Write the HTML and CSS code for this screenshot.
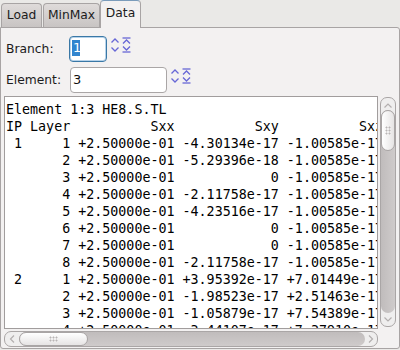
FILE: index.html
```html
<!DOCTYPE html>
<html lang="en">
<head>
    <meta charset="UTF-8">
    <title>Element data</title>
    <link rel="stylesheet" href="styles.css">
</head>
<body>
    <div class="tabs">
        <div class="tab tab-load">Load</div>
        <div class="tab tab-minmax">MinMax</div>
        <div class="tab tab-data active">Data</div>
    </div>

    <div class="panel">
        <div class="form">
            <div class="form-row">
                <label class="label">Branch:</label>
                <div class="spin-input branch-input focused"><span class="selected">1</span></div>
                <svg class="spin-icons" width="22" height="16" viewBox="0 0 22 16">
                    <polyline points="1.5,5.5 5,2 8.5,5.5"/>
                    <polyline points="1.5,10.5 5,14 8.5,10.5"/>
                    <line x1="12.5" y1="1" x2="20.5" y2="1"/>
                    <polyline points="13,6.5 16.5,3 20,6.5"/>
                    <polyline points="13,9.5 16.5,13 20,9.5"/>
                    <line x1="12.5" y1="15" x2="20.5" y2="15"/>
                </svg>
            </div>
            <div class="form-row">
                <label class="label element-label">Element:</label>
                <div class="spin-input element-input">3</div>
                <svg class="spin-icons" width="22" height="16" viewBox="0 0 22 16">
                    <polyline points="1.5,5.5 5,2 8.5,5.5"/>
                    <polyline points="1.5,10.5 5,14 8.5,10.5"/>
                    <line x1="12.5" y1="1" x2="20.5" y2="1"/>
                    <polyline points="13,6.5 16.5,3 20,6.5"/>
                    <polyline points="13,9.5 16.5,13 20,9.5"/>
                    <line x1="12.5" y1="15" x2="20.5" y2="15"/>
                </svg>
            </div>
        </div>

        <div class="output">
            <div class="output-main">
                <div class="textbox">
<pre>Element 1:3 HE8.S.TL
IP Layer          Sxx          Sxy          Sxz
 1     1 +2.50000e-01 -4.30134e-17 -1.00585e-17
       2 +2.50000e-01 -5.29396e-18 -1.00585e-17
       3 +2.50000e-01            0 -1.00585e-17
       4 +2.50000e-01 -2.11758e-17 -1.00585e-17
       5 +2.50000e-01 -4.23516e-17 -1.00585e-17
       6 +2.50000e-01            0 -1.00585e-17
       7 +2.50000e-01            0 -1.00585e-17
       8 +2.50000e-01 -2.11758e-17 -1.00585e-17
 2     1 +2.50000e-01 +3.95392e-17 +7.01449e-17
       2 +2.50000e-01 -1.98523e-17 +2.51463e-17
       3 +2.50000e-01 -1.05879e-17 +7.54389e-17
       4 +2.50000e-01 -3.44107e-17 +7.37910e-17
       5 +2.50000e-01 -2.11758e-17 +7.37910e-17</pre>
                </div>
                <div class="hscroll">
                    <svg class="arrow" width="14" height="14" viewBox="0 0 14 14"><polyline points="9,3.5 5.5,7 9,10.5"/></svg>
                    <div class="htrack">
                        <div class="hhandle"><span class="grip grip-h"></span></div>
                    </div>
                    <svg class="arrow" width="12" height="14" viewBox="0 0 12 14"><polyline points="4,3.5 7.5,7 4,10.5"/></svg>
                </div>
            </div>
            <div class="vscroll">
                <svg class="arrow" width="14" height="12" viewBox="0 0 14 12"><polyline points="3.5,9.5 7,6 10.5,9.5"/></svg>
                <div class="vtrack">
                    <div class="vhandle"><span class="grip grip-v"></span></div>
                </div>
                <svg class="arrow" width="14" height="13" viewBox="0 0 14 13"><polyline points="3.5,4.5 7,8 10.5,4.5"/></svg>
            </div>
        </div>
    </div>
</body>
</html>
```

FILE: styles.css
```css
body {
    margin: 0;
    width: 400px;
    height: 350px;
    overflow: hidden;
    background: #eae9e7;
    font-family: 'DejaVu Sans', sans-serif;
    font-size: 12.3px;
    color: #1c1c1c;
}
.tabs {
    display: flex;
    align-items: flex-end;
    height: 27px;
    padding-left: 1px;
}
.tab {
    box-sizing: border-box;
    height: 24px;
    padding-top: 4px;
    text-align: center;
    border: 1px solid #a8a4a4;
    border-bottom: none;
    border-radius: 4px 4px 0 0;
    background: linear-gradient(#dfdbda, #c8c4c3);
}
.tab-load {
    width: 41px;
}
.tab-minmax {
    width: 57px;
    margin-left: 1px;
}
.tab-data {
    width: 41px;
}
.tab.active {
    position: relative;
    z-index: 1;
    height: 28px;
    margin-bottom: -1px;
    padding-top: 5px;
    background: #f3f1f1;
    border-color: #7b9cbb #a8a4a4 #a8a4a4;
}
.panel {
    box-sizing: border-box;
    height: 322px;
    padding: 8px 3px 2px;
    border: 1px solid #a8a4a4;
    border-radius: 0 3px 3px 3px;
    background: #f3f1f1;
}
.form {
    display: flex;
    flex-direction: column;
    gap: 5px;
}
.form-row {
    display: flex;
    align-items: flex-start;
    height: 26px;
}
.label {
    width: 63px;
    padding-left: 2px;
    line-height: 26px;
}
.element-label {
    width: 64px;
}
.spin-input {
    box-sizing: border-box;
    height: 26px;
    padding-left: 2px;
    border: 1px solid #aaa6a6;
    border-radius: 4px;
    background: #ffffff;
    font-size: 13px;
    line-height: 24px;
    color: #111;
}
.branch-input {
    width: 38px;
}
.element-input {
    width: 97px;
}
.spin-input.focused {
    border-color: #3a78a6;
    box-shadow: inset 0 0 0 1px #b7d3ea;
}
.selected {
    display: inline-block;
    padding: 0 0 0 1px;
    width: 7px;
    line-height: 16px;
    margin-top: 3px;
    vertical-align: top;
    background: #3185cf;
    color: #ffffff;
}
.spin-icons {
    margin: 1px 0 0 3px;
    fill: none;
    stroke: #6767d6;
    stroke-width: 1.3;
}
.output {
    display: flex;
    gap: 2px;
    margin-top: 3px;
}
.output-main {
    display: flex;
    flex-direction: column;
    gap: 1px;
}
.textbox {
    box-sizing: border-box;
    width: 374px;
    height: 233px;
    overflow: hidden;
    border: 1px solid #a19d9d;
    background: #ffffff;
}
.textbox pre {
    margin: 0;
    padding: 4px 0 0 1px;
    font-family: 'DejaVu Sans Mono', monospace;
    font-size: 13.33px;
    line-height: 17px;
    color: #000;
}
.arrow {
    flex: none;
    fill: none;
    stroke: #b3afaf;
    stroke-width: 1.2;
}
.hscroll {
    box-sizing: border-box;
    display: flex;
    align-items: center;
    width: 374px;
    height: 16px;
    margin-top: 1px;
    border: 1px solid #aaa6a6;
    border-radius: 7px;
    background: #efeeee;
}
.htrack {
    flex: 1;
    height: 14px;
    border-radius: 7px;
    background: linear-gradient(#c0bcbc, #cfcbcb);
}
.hhandle {
    box-sizing: border-box;
    display: flex;
    align-items: center;
    justify-content: center;
    width: 69px;
    height: 14px;
    border: 1px solid #a9a5a5;
    border-radius: 7px;
    background: linear-gradient(#ffffff, #e6e4e4);
}
.vscroll {
    box-sizing: border-box;
    display: flex;
    flex-direction: column;
    align-items: center;
    width: 16px;
    height: 230px;
    margin-top: 1px;
    border: 1px solid #aaa6a6;
    border-radius: 7px;
    background: #efeeee;
}
.vtrack {
    flex: 1;
    width: 14px;
    border-radius: 7px;
    background: linear-gradient(90deg, #c0bcbc, #cfcbcb);
}
.vhandle {
    box-sizing: border-box;
    display: flex;
    align-items: center;
    justify-content: center;
    width: 14px;
    height: 41px;
    border: 1px solid #a9a5a5;
    border-radius: 7px;
    background: linear-gradient(90deg, #ffffff, #e6e4e4);
}
.grip {
    display: block;
    background-image: radial-gradient(circle, #b9b5b5 0.9px, transparent 1.1px);
}
.grip-h {
    width: 9px;
    height: 6px;
    background-size: 3px 3px;
}
.grip-v {
    width: 6px;
    height: 9px;
    background-size: 3px 3px;
}
```
